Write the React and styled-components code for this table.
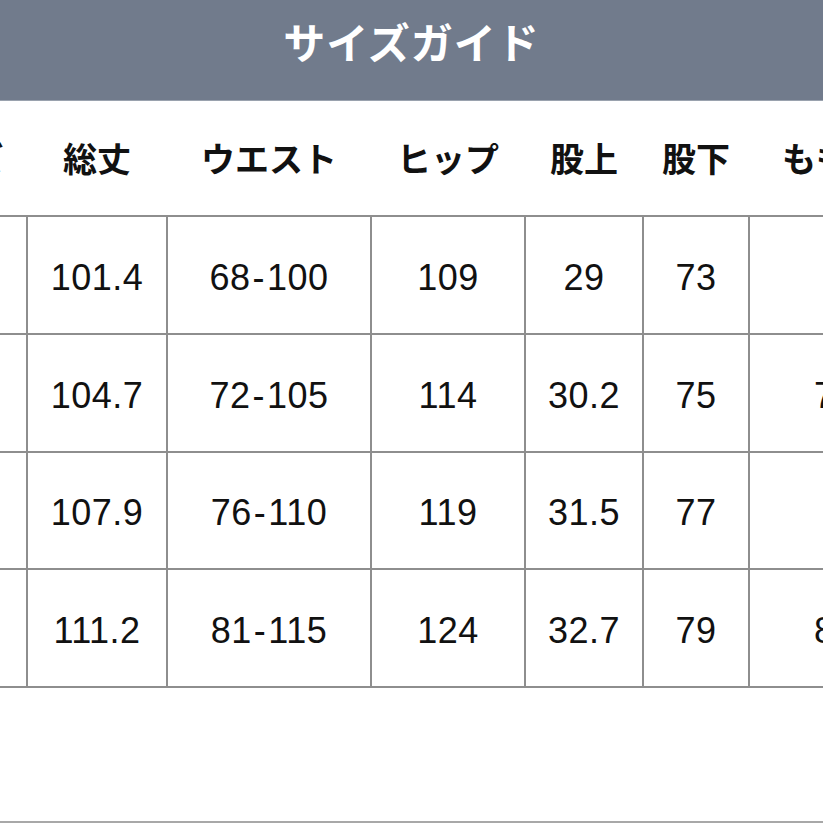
import React from 'react';
import styled, { createGlobalStyle } from 'styled-components';

const Global = createGlobalStyle`
  html, body {
    margin: 0;
    padding: 0;
    background: #ffffff;
  }
  body {
    font-family: 'Liberation Sans', 'Noto Sans CJK JP', sans-serif;
  }
`;

const Page = styled.div`
  width: 823px;
  height: 823px;
  overflow: hidden;
  display: flex;
  flex-direction: column;
  background: #ffffff;
`;

const Banner = styled.header`
  height: 101px;
  flex-shrink: 0;
  display: flex;
  justify-content: center;
  align-items: center;
  padding-bottom: 20px;
  box-sizing: border-box;
  background-color: #717b8c;
  border-bottom: 1px solid #9aa2ae;
`;

const Title = styled.h1`
  margin: 0;
  color: #ffffff;
  font-family: 'Noto Sans CJK JP', sans-serif;
  font-weight: 700;
  font-size: 42px;
  letter-spacing: 1px;
`;

const TableWrap = styled.div`
  flex: 1;
  overflow: hidden;
  border-bottom: 2px solid #a8a8a8;
`;

const Table = styled.table`
  margin-left: -122px;
  border-collapse: collapse;
  table-layout: fixed;
  width: 1072px;
`;

const HeadCell = styled.th`
  height: 113px;
  padding: 0 0 1px;
  font-family: 'Noto Sans CJK JP', sans-serif;
  font-weight: 700;
  font-size: 34px;
  color: #111111;
  text-align: center;
  white-space: nowrap;
  overflow: hidden;
`;

const Cell = styled.td`
  height: 109.75px;
  padding: 6px 0 0;
  border: 2px solid #8e8e8e;
  font-family: 'Liberation Sans', Arial, sans-serif;
  font-size: 36px;
  letter-spacing: 0.5px;
  color: #111111;
  text-align: center;
  white-space: nowrap;
`;

const Dash = styled.span`
  margin: 0 2px;
`;

const widths = [148, 140, 204, 154, 118, 106, 202];
const heads = ['サイズ', '総丈', 'ウエスト', 'ヒップ', '股上', '股下', 'もも周り'];
const rows = [
  ['S', '101.4', '68-100', '109', '29', '73', '62'],
  ['M', '104.7', '72-105', '114', '30.2', '75', '70.5'],
  ['L', '107.9', '76-110', '119', '31.5', '77', '75'],
  ['XL', '111.2', '81-115', '124', '32.7', '79', '80.5'],
];

const renderValue = (v) => {
  const parts = v.split('-');
  if (parts.length < 2) return v;
  return (
    <>
      {parts[0]}
      <Dash>-</Dash>
      {parts[1]}
    </>
  );
};

export default function App() {
  return (
    <Page>
      <Global />
      <Banner>
        <Title>サイズガイド</Title>
      </Banner>
      <TableWrap>
        <Table>
          <colgroup>
            {widths.map((w, i) => (
              <col key={i} style={{ width: w }} />
            ))}
          </colgroup>
          <thead>
            <tr>
              {heads.map((h) => (
                <HeadCell key={h}>{h}</HeadCell>
              ))}
            </tr>
          </thead>
          <tbody>
            {rows.map((r) => (
              <tr key={r[0]}>
                {r.map((v, i) => (
                  <Cell key={i}>{renderValue(v)}</Cell>
                ))}
              </tr>
            ))}
          </tbody>
        </Table>
      </TableWrap>
    </Page>
  );
}
